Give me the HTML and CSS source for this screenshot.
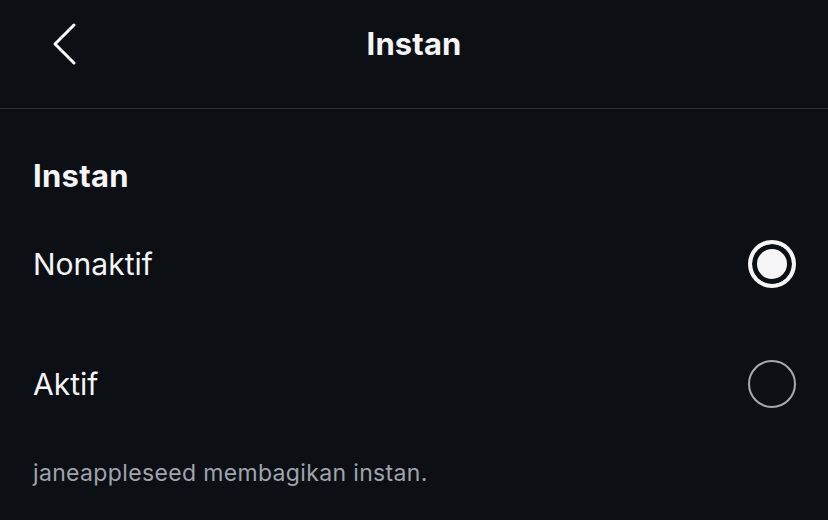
FILE: index.html
```html
<!DOCTYPE html>
<html lang="id">
<head>
    <meta charset="UTF-8">
    <meta name="viewport" content="width=device-width, initial-scale=1.0">
    <title>Instan</title>
    <link rel="stylesheet" href="styles.css">
</head>
<body>
    <!-- Top bar -->
    <header class="top-bar">
        <div class="nav-row">
            <button class="back-btn" aria-label="Kembali">
                <svg width="28" height="44" viewBox="0 0 28 44">
                    <path d="M22 3 L3 22 L22 41" fill="none" stroke="#fff" stroke-width="3" stroke-linecap="round" stroke-linejoin="round"/>
                </svg>
            </button>
            <h1 class="page-title">Instan</h1>
        </div>
    </header>

    <main class="settings">
        <h2 class="section-title">Instan</h2>

        <div class="option-list" role="radiogroup">
            <label class="option">
                <span class="option-label">Nonaktif</span>
                <input type="radio" name="instan" value="off" checked>
                <span class="radio"></span>
            </label>
            <label class="option">
                <span class="option-label">Aktif</span>
                <input type="radio" name="instan" value="on">
                <span class="radio"></span>
            </label>
        </div>

        <p class="note">janeappleseed membagikan instan.</p>
    </main>
</body>
</html>
```

FILE: styles.css
```css
:root {
    --bg-color: #0c0f14;
    --text-color: #f5f5f7;
    --muted-color: #a0a4ac;
    --divider-color: #2a2d33;
    --radio-off: #a8abb2;
}

* {
    margin: 0;
    padding: 0;
    box-sizing: border-box;
}

body {
    font-family: 'Inter', 'Noto Sans', sans-serif;
    background: var(--bg-color);
    color: var(--text-color);
    width: 828px;
    height: 520px;
    overflow: hidden;
}

/* Header */
.top-bar {
    height: 109px;
    border-bottom: 1px solid var(--divider-color);
}

.nav-row {
    position: relative;
    height: 87px;
    display: flex;
    align-items: center;
    justify-content: center;
}

.back-btn {
    position: absolute;
    left: 52px;
    top: 22px;
    background: none;
    border: none;
    display: flex;
}

.page-title {
    font-size: 31px;
    font-weight: 700;
    letter-spacing: 0.1px;
}

/* Content */
.settings {
    padding: 47px 32px 0 33px;
}

.section-title {
    font-size: 31px;
    font-weight: 700;
    line-height: 40px;
    letter-spacing: 0.3px;
}

.option-list {
    margin-top: 8px;
}

.option {
    height: 120px;
    display: flex;
    align-items: center;
    justify-content: space-between;
    cursor: pointer;
}

.option-label {
    font-size: 30px;
    font-weight: 400;
}

.option input {
    display: none;
}

.radio {
    width: 48px;
    height: 48px;
    border-radius: 50%;
    border: 2.5px solid var(--radio-off);
}

.option input:checked + .radio {
    border: 4px solid var(--text-color);
    background: var(--text-color);
    box-shadow: inset 0 0 0 5px var(--bg-color);
}

.note {
    margin-top: 14px;
    font-size: 23px;
    line-height: 30px;
    letter-spacing: 0.35px;
    color: var(--muted-color);
}
```
